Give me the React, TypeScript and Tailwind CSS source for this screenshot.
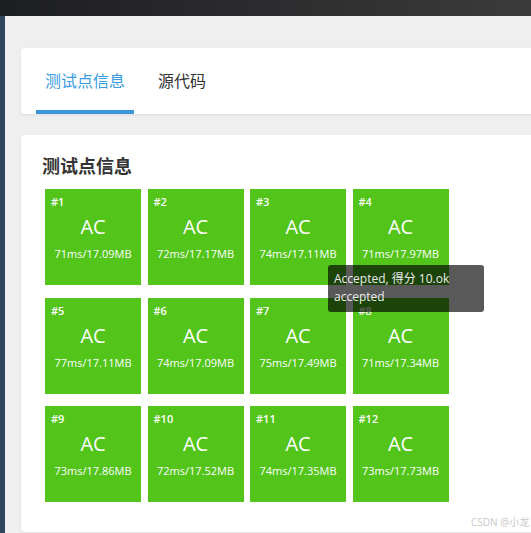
const CASES = [
  { id: 1, time: 71, mem: '17.09' },
  { id: 2, time: 72, mem: '17.17' },
  { id: 3, time: 74, mem: '17.11' },
  { id: 4, time: 71, mem: '17.97' },
  { id: 5, time: 77, mem: '17.11' },
  { id: 6, time: 74, mem: '17.09' },
  { id: 7, time: 75, mem: '17.49' },
  { id: 8, time: 71, mem: '17.34' },
  { id: 9, time: 73, mem: '17.86' },
  { id: 10, time: 72, mem: '17.52' },
  { id: 11, time: 74, mem: '17.35' },
  { id: 12, time: 73, mem: '17.73' },
]

const FONT = { fontFamily: '"Open Sans", "Noto Sans CJK SC", sans-serif' }

export default function App() {
  return (
    <div className="w-[531px] h-[533px] overflow-hidden flex flex-col bg-[#efefef]" style={FONT}>
      {/* top bar */}
      <div className="h-4 shrink-0 bg-gradient-to-r from-[#1d1e20] to-[#3b3b3c]" />

      <div className="flex flex-1 min-h-0">
        <div className="w-[5px] shrink-0 bg-[#2f465e]" />

        <div className="flex-1 pl-4 pt-8 flex flex-col gap-[21px] overflow-hidden">
          {/* tabs card */}
          <div className="w-[540px] h-[66px] shrink-0 bg-white rounded-[4px] shadow-[0_1px_3px_rgba(0,0,0,0.08)] flex items-stretch pl-[15px]">
            <div className="relative flex items-center px-[9px] text-[16px] text-[#3a9be0]">
              测试点信息
              <div className="absolute left-0 right-0 bottom-0 h-[4px] bg-[#3897db]" />
            </div>
            <div className="flex items-center px-[24px] text-[16px] text-[#333]">源代码</div>
          </div>

          {/* test cases card */}
          <div className="relative w-[540px] h-[397px] shrink-0 bg-white rounded-[4px] shadow-[0_1px_3px_rgba(0,0,0,0.08)] pt-[19px] pl-[21px]">
            <h2 className="text-[18px] leading-[24px] font-bold text-[#333]">测试点信息</h2>
            <div className="mt-[11px] ml-[3px] grid grid-cols-[repeat(4,96px)] gap-x-[6.5px] gap-y-[12.5px]">
              {CASES.map((c) => (
                <div key={c.id} className="h-24 bg-[#52c41a] text-white relative flex flex-col items-center">
                  <div className="self-start pl-[6px] pt-[6px] text-[11px] leading-[14px] font-semibold">#{c.id}</div>
                  <div className="mt-[6px] text-[20px] leading-[24px]">AC</div>
                  <div className="mt-[8px] text-[11px] leading-[14px]">
                    {c.time}ms/{c.mem}MB
                  </div>
                </div>
              ))}
            </div>

            {/* tooltip */}
            <div className="absolute left-[307px] top-[130px] w-[156px] h-[47px] rounded-[3px] bg-[rgba(0,0,0,0.65)] text-[#ececec] text-[12px] leading-[18px] px-[6px] pt-[5px]">
              <div>Accepted, 得分 10.ok</div>
              <div>accepted</div>
            </div>

            <div className="absolute left-[450px] top-[380px] text-[10px] text-[#c8c8c8]">CSDN @小龙</div>
          </div>
        </div>
      </div>
    </div>
  )
}
